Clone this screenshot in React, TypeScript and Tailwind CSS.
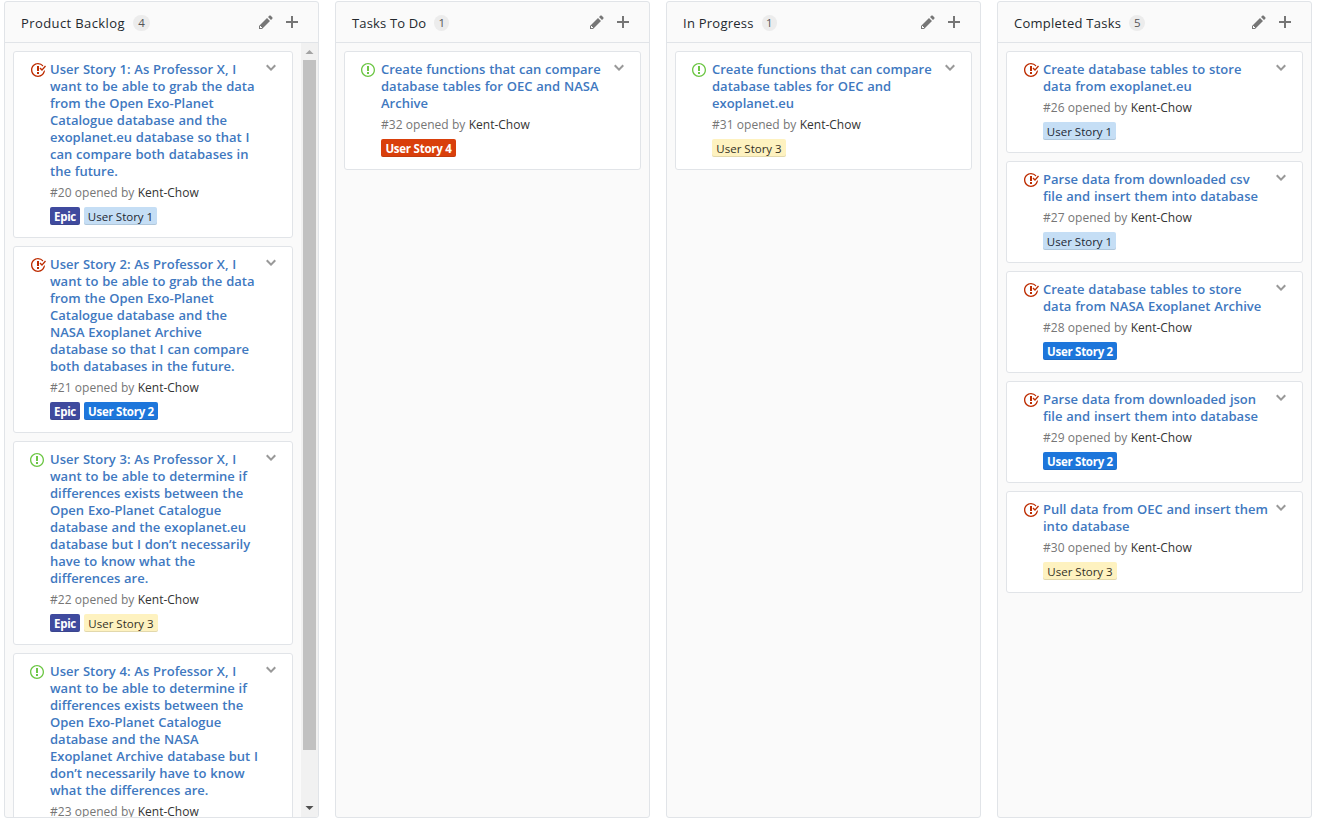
type LabelKind = 'epic' | 'one' | 'two' | 'three' | 'four';

interface Issue {
  id: number;
  closed?: boolean;
  title: string[];
  labels: LabelKind[];
}

interface BoardColumn {
  name: string;
  nameStyle: string;
  count: number;
  badgeStyle: string;
  scroll?: boolean;
  issues: Issue[];
}

const LABELS: Record<LabelKind, { text: string; style: string }> = {
  epic: { text: 'Epic', style: 'w-[30px] bg-[#3f4a9e] text-white font-bold tracking-[-0.28px]' },
  one: { text: 'User Story 1', style: 'w-[73px] bg-[#c5def5] text-[#1c2733]' },
  two: { text: 'User Story 2', style: 'w-[74px] bg-[#1d76db] text-white font-bold tracking-[-0.28px]' },
  three: { text: 'User Story 3', style: 'w-[74px] bg-[#fef2c0] text-[#33301f]' },
  four: { text: 'User Story 4', style: 'w-[75px] bg-[#d93f0b] text-white font-bold tracking-[-0.25px]' },
};

const COLUMNS: BoardColumn[] = [
  {
    name: 'Product Backlog',
    nameStyle: 'tracking-[0.4px]',
    count: 4,
    badgeStyle: 'w-[17px]',
    scroll: true,
    issues: [
      {
        id: 20,
        closed: true,
        title: ['User Story 1: As Professor X, I', 'want to be able to grab the data', 'from the Open Exo-Planet', 'Catalogue database and the', 'exoplanet.eu database so that I', 'can compare both databases in', 'the future.'],
        labels: ['epic', 'one'],
      },
      {
        id: 21,
        closed: true,
        title: ['User Story 2: As Professor X, I', 'want to be able to grab the data', 'from the Open Exo-Planet', 'Catalogue database and the', 'NASA Exoplanet Archive', 'database so that I can compare', 'both databases in the future.'],
        labels: ['epic', 'two'],
      },
      {
        id: 22,
        title: ['User Story 3: As Professor X, I', 'want to be able to determine if', 'differences exists between the', 'Open Exo-Planet Catalogue', 'database and the exoplanet.eu', 'database but I don’t necessarily', 'have to know what the', 'differences are.'],
        labels: ['epic', 'three'],
      },
      {
        id: 23,
        title: ['User Story 4: As Professor X, I', 'want to be able to determine if', 'differences exists between the', 'Open Exo-Planet Catalogue', 'database and the NASA', 'Exoplanet Archive database but I', 'don’t necessarily have to know', 'what the differences are.'],
        labels: ['epic', 'four'],
      },
    ],
  },
  {
    name: 'Tasks To Do',
    nameStyle: 'tracking-[0.15px]',
    count: 1,
    badgeStyle: 'w-[15px]',
    issues: [{ id: 32, title: ['Create functions that can compare', 'database tables for OEC and NASA', 'Archive'], labels: ['four'] }],
  },
  {
    name: 'In Progress',
    nameStyle: 'tracking-[0.25px]',
    count: 1,
    badgeStyle: 'w-[15px]',
    issues: [{ id: 31, title: ['Create functions that can compare', 'database tables for OEC and', 'exoplanet.eu'], labels: ['three'] }],
  },
  {
    name: 'Completed Tasks',
    nameStyle: 'tracking-[0.25px]',
    count: 5,
    badgeStyle: 'w-4',
    issues: [
      { id: 26, closed: true, title: ['Create database tables to store', 'data from exoplanet.eu'], labels: ['one'] },
      { id: 27, closed: true, title: ['Parse data from downloaded csv', 'file and insert them into database'], labels: ['one'] },
      { id: 28, closed: true, title: ['Create database tables to store', 'data from NASA Exoplanet Archive'], labels: ['two'] },
      { id: 29, closed: true, title: ['Parse data from downloaded json', 'file and insert them into database'], labels: ['two'] },
      { id: 30, closed: true, title: ['Pull data from OEC and insert them', 'into database'], labels: ['three'] },
    ],
  },
];

const ICONS = {
  opened: { w: 14, d: 'M7 2.3c3.14 0 5.7 2.56 5.7 5.7s-2.56 5.7-5.7 5.7A5.71 5.71 0 0 1 1.3 8c0-3.14 2.56-5.7 5.7-5.7zM7 1C3.14 1 0 4.14 0 8s3.14 7 7 7 7-3.14 7-7-3.14-7-7-7zm1 3H6v5h2V4zm0 6H6v2h2v-2z' },
  closed: { w: 16, d: 'M7 10h2v2H7v-2zm2-6H7v5h2V4zm1.5 1.5l-1 1L12 9l4-4.5-1-1L12 7l-1.5-1.5zM8 13.7A5.71 5.71 0 0 1 2.3 8c0-3.14 2.56-5.7 5.7-5.7 1.83 0 3.45.88 4.5 2.2l.92-.92A6.947 6.947 0 0 0 8 1C4.14 1 1 4.14 1 8s3.14 7 7 7 7-3.14 7-7l-1.52 1.52c-.66 2.41-2.86 4.19-5.48 4.19v-.01z' },
  pencil: { w: 14, d: 'M0 12v3h3l8-8-3-3-8 8zm3 2H1v-2h1v1h1v1zm10.3-9.3L12 6 9 3l1.3-1.3a.996.996 0 0 1 1.41 0l1.59 1.59c.39.39.39 1.02 0 1.41z' },
  plus: { w: 12, d: 'M12 9H7v5H5V9H0V7h5V2h2v5h5v2z' },
  chevron: { w: 10, d: 'M5 11L0 6l1.5-1.5L5 8.25 8.5 4.5 10 6l-5 5z' },
};

function Icon({ name, className = '' }: { name: keyof typeof ICONS; className?: string }) {
  const { w, d } = ICONS[name];
  return (
    <svg width={w} height={16} viewBox={`0 0 ${w} 16`} className={`block shrink-0 fill-current ${className}`} aria-hidden="true">
      <path fillRule="evenodd" d={d} />
    </svg>
  );
}

function Card({ issue }: { issue: Issue }) {
  return (
    <article className="flex shrink-0 rounded-[3px] border border-[#e1e4e8] bg-white pt-[9px] pr-4 pb-3 pl-4">
      <div className="w-5 shrink-0 pt-[1px]">
        <Icon name={issue.closed ? 'closed' : 'opened'} className={issue.closed ? 'text-[#bd2c00]' : 'text-[#6cc644]'} />
      </div>
      <div className="min-w-0 flex-1">
        <h3 className="text-[13px] leading-[17px] font-semibold whitespace-nowrap text-[#4078c0] [word-spacing:0.45px]">
          {issue.title.map((line) => (
            <span key={line} className="block">{line}</span>
          ))}
        </h3>
        <p className="mt-1 text-[12px] leading-[18px] whitespace-nowrap text-[#767676] [word-spacing:0.25px]">
          #{issue.id} opened by <span className="text-[#333]">Kent-Chow</span>
        </p>
        <div className="mt-[5px] flex gap-1">
          {issue.labels.map((kind) => (
            <span key={kind} className={`flex h-[18px] items-center justify-center rounded-[2px] pt-[2px] text-[11.5px] leading-[18px] whitespace-nowrap shadow-[inset_0_-1px_0_rgba(27,31,35,0.12)] ${LABELS[kind].style}`}>
              {LABELS[kind].text}
            </span>
          ))}
        </div>
      </div>
      <Icon name="chevron" className="-mt-[1px] text-[#999]" />
    </article>
  );
}

function Scrollbar() {
  return (
    <div className="flex w-[17px] shrink-0 flex-col items-center bg-[#f1f1f1]">
      <svg width="17" height="17" viewBox="0 0 17 17" className="block shrink-0 fill-[#a3a3a3]"><path d="M4.5 11L8.5 7L12.5 11z" /></svg>
      <div className="h-[690px] w-[13px] bg-[#c1c1c1]" />
      <svg width="17" height="17" viewBox="0 0 17 17" className="mt-auto block shrink-0 fill-[#505050]"><path d="M4.5 6L8.5 10L12.5 6z" /></svg>
    </div>
  );
}

function Column({ column }: { column: BoardColumn }) {
  return (
    <section className="flex h-[817px] w-[315px] shrink-0 flex-col overflow-hidden rounded-[3px] border border-[#e1e4e8] bg-[#fafafa]">
      <header className="flex h-[41px] shrink-0 items-center border-b border-[#e1e4e8] pr-5 pl-4">
        <h2 className={`pt-[2px] text-[13px] leading-5 font-medium whitespace-nowrap text-[#24292e] ${column.nameStyle}`}>{column.name}</h2>
        <span className={`mt-[2px] ml-2 flex h-4 items-center justify-center rounded-full bg-[#ececec] text-[11.5px] leading-4 text-[#555] ${column.badgeStyle}`}>{column.count}</span>
        <div className="ml-auto flex gap-[13px] text-[#767676]">
          <Icon name="pencil" />
          <Icon name="plus" />
        </div>
      </header>
      <div className="flex min-h-0 flex-1">
        <div className="flex min-w-0 flex-1 flex-col gap-2 overflow-hidden p-2">
          {column.issues.map((issue) => (
            <Card key={issue.id} issue={issue} />
          ))}
        </div>
        {column.scroll && <Scrollbar />}
      </div>
    </section>
  );
}

export default function App() {
  return (
    <main className="flex h-[827px] w-[1320px] gap-4 overflow-hidden bg-white pt-[1px] pl-1 font-['Open_Sans','Noto_Sans',sans-serif]">
      {COLUMNS.map((column) => (
        <Column key={column.name} column={column} />
      ))}
    </main>
  );
}
